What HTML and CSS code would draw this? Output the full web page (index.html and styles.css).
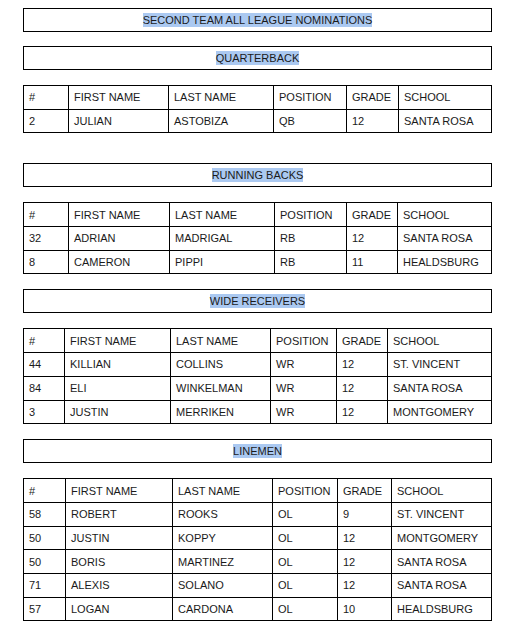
FILE: index.html
```html
<!DOCTYPE html>
<html>
<head>
<meta charset="utf-8">
<link rel="stylesheet" href="styles.css">
</head>
<body>
<div class="page">
  <div class="banner title"><span class="hl">SECOND TEAM ALL LEAGUE NOMINATIONS</span></div>

  <div class="banner"><span class="hl">QUARTERBACK</span></div>
  <table class="roster first">
    <colgroup><col style="width:45px"><col style="width:100px"><col style="width:105px"><col style="width:73px"><col style="width:52px"><col></colgroup>
    <tr><td>#</td><td>FIRST NAME</td><td>LAST NAME</td><td>POSITION</td><td>GRADE</td><td>SCHOOL</td></tr>
    <tr><td>2</td><td>JULIAN</td><td>ASTOBIZA</td><td>QB</td><td>12</td><td>SANTA ROSA</td></tr>
  </table>

  <div class="banner"><span class="hl">RUNNING BACKS</span></div>
  <table class="roster">
    <colgroup><col style="width:45px"><col style="width:101px"><col style="width:105px"><col style="width:72px"><col style="width:51px"><col></colgroup>
    <tr><td>#</td><td>FIRST NAME</td><td>LAST NAME</td><td>POSITION</td><td>GRADE</td><td>SCHOOL</td></tr>
    <tr><td>32</td><td>ADRIAN</td><td>MADRIGAL</td><td>RB</td><td>12</td><td>SANTA ROSA</td></tr>
    <tr><td>8</td><td>CAMERON</td><td>PIPPI</td><td>RB</td><td>11</td><td>HEALDSBURG</td></tr>
  </table>

  <div class="banner"><span class="hl">WIDE RECEIVERS</span></div>
  <table class="roster">
    <colgroup><col style="width:41px"><col style="width:106px"><col style="width:100px"><col style="width:66px"><col style="width:51px"><col></colgroup>
    <tr><td>#</td><td>FIRST NAME</td><td>LAST NAME</td><td>POSITION</td><td>GRADE</td><td>SCHOOL</td></tr>
    <tr><td>44</td><td>KILLIAN</td><td>COLLINS</td><td>WR</td><td>12</td><td>ST. VINCENT</td></tr>
    <tr><td>84</td><td>ELI</td><td>WINKELMAN</td><td>WR</td><td>12</td><td>SANTA ROSA</td></tr>
    <tr><td>3</td><td>JUSTIN</td><td>MERRIKEN</td><td>WR</td><td>12</td><td>MONTGOMERY</td></tr>
  </table>

  <div class="banner"><span class="hl">LINEMEN</span></div>
  <table class="roster">
    <colgroup><col style="width:42px"><col style="width:107px"><col style="width:100px"><col style="width:65px"><col style="width:54px"><col></colgroup>
    <tr><td>#</td><td>FIRST NAME</td><td>LAST NAME</td><td>POSITION</td><td>GRADE</td><td>SCHOOL</td></tr>
    <tr><td>58</td><td>ROBERT</td><td>ROOKS</td><td>OL</td><td>9</td><td>ST. VINCENT</td></tr>
    <tr><td>50</td><td>JUSTIN</td><td>KOPPY</td><td>OL</td><td>12</td><td>MONTGOMERY</td></tr>
    <tr><td>50</td><td>BORIS</td><td>MARTINEZ</td><td>OL</td><td>12</td><td>SANTA ROSA</td></tr>
    <tr><td>71</td><td>ALEXIS</td><td>SOLANO</td><td>OL</td><td>12</td><td>SANTA ROSA</td></tr>
    <tr><td>57</td><td>LOGAN</td><td>CARDONA</td><td>OL</td><td>10</td><td>HEALDSBURG</td></tr>
  </table>
</div>
</body>
</html>
```

FILE: styles.css
```css
html, body {
  margin: 0;
  padding: 0;
  background: #fff;
}
body {
  font-family: "Liberation Sans", Arial, sans-serif;
  font-size: 11px;
  color: #1a1a1a;
}
.page {
  width: 469px;
  padding: 8px 0 0 23px;
}
.banner {
  box-sizing: border-box;
  height: 24px;
  border: 1px solid #000;
  display: flex;
  align-items: center;
  justify-content: center;
  margin-bottom: 15px;
}
.title {
  margin-bottom: 14px;
}
.hl {
  background: #abc9f1;
  line-height: 14px;
  padding: 0;
}
.roster {
  width: 469px;
  table-layout: fixed;
  border-collapse: collapse;
  margin-bottom: 15px;
}
.roster.first {
  margin-bottom: 30px;
}
.roster td {
  border: 1px solid #000;
  height: 22.7px;
  padding: 0 0 0 5px;
  vertical-align: middle;
  white-space: nowrap;
  overflow: hidden;
}
```
